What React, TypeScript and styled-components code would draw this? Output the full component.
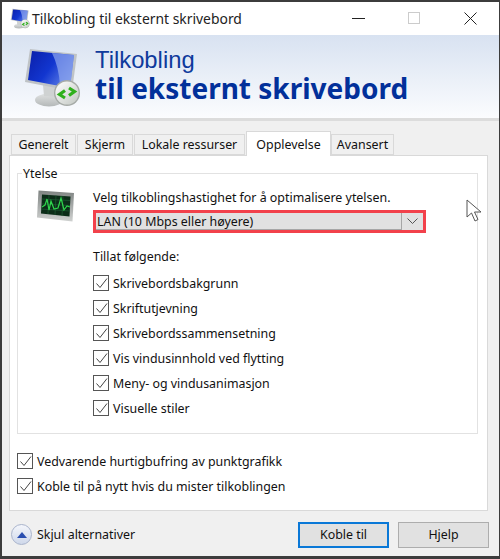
import React from 'react';
import styled, { createGlobalStyle } from 'styled-components';

const uiFont = `"Noto Sans", "Open Sans", "Liberation Sans", sans-serif`;

const GlobalStyle = createGlobalStyle`
  html, body {
    margin: 0;
    padding: 0;
    background: #fff;
  }
`;

const tabs = [
  { label: 'Generelt', width: 65 },
  { label: 'Skjerm', width: 56 },
  { label: 'Lokale ressurser', width: 111 },
  { label: 'Opplevelse', width: 85, active: true },
  { label: 'Avansert', width: 63 },
];

const options = [
  'Skrivebordsbakgrunn',
  'Skriftutjevning',
  'Skrivebordssammensetning',
  'Vis vindusinnhold ved flytting',
  'Meny- og vindusanimasjon',
  'Visuelle stiler',
];

const persistent = [
  'Vedvarende hurtigbufring av punktgrafikk',
  'Koble til på nytt hvis du mister tilkoblingen',
];

function MonitorIcon({ width, idSuffix }: { width: number; idSuffix: string }) {
  return (
    <svg width={width} height={(width * 60) / 58} viewBox="0 0 58 60">
      <defs>
        <linearGradient id={`screen${idSuffix}`} x1="0" y1="0" x2="1" y2="0.6">
          <stop offset="0" stopColor="#0a1ea8" />
          <stop offset="0.55" stopColor="#1236d0" />
          <stop offset="1" stopColor="#5f80e6" />
        </linearGradient>
        <linearGradient id={`badge${idSuffix}`} x1="0" y1="0" x2="1" y2="1">
          <stop offset="0" stopColor="#ffffff" />
          <stop offset="1" stopColor="#c2c7c2" />
        </linearGradient>
        <linearGradient id={`foot${idSuffix}`} x1="0" y1="0" x2="0" y2="1">
          <stop offset="0" stopColor="#dfe1e1" />
          <stop offset="1" stopColor="#b4b8b8" />
        </linearGradient>
      </defs>
      <ellipse cx="26" cy="53" rx="14" ry="6.5" fill={`url(#foot${idSuffix})`} />
      <path d="M20 38 L34 40 L35 50 L21 49 Z" fill="#cfd2d2" />
      <path d="M7 2 L54 7 L49 44 L2 35 Z" fill="#bfc3c6" />
      <path d="M9 4 L51 8 L47 41 L5 33 Z" fill={`url(#screen${idSuffix})`} />
      <path d="M29 6 L51 8 L47 41 L37 39 Q36 20 29 6 Z" fill="#90a8ee" opacity="0.7" />
      <circle cx="44" cy="46" r="13" fill="#a6aba7" />
      <circle cx="44" cy="46" r="11.6" fill={`url(#badge${idSuffix})`} />
      <path d="M42 43.5 L36.5 47.5 L42 51" stroke="#2fb01c" strokeWidth="3.2" fill="none" />
      <path d="M46 41 L51.5 44.5 L46 48.5" stroke="#2fb01c" strokeWidth="3.2" fill="none" />
    </svg>
  );
}

function PerformanceIcon() {
  return (
    <svg width="40" height="33" viewBox="0 0 40 33">
      <defs>
        <linearGradient id="bezel" x1="0" y1="0" x2="0" y2="1">
          <stop offset="0" stopColor="#7f8482" />
          <stop offset="1" stopColor="#cfd1d0" />
        </linearGradient>
      </defs>
      <path d="M1.5 0.5 L37 3 L35.5 31.5 L0 27.5 Z" fill="url(#bezel)" />
      <path d="M5 4.5 L33.5 6.5 L32.5 26.5 L4 23.5 Z" fill="#0b2c18" />
      <path d="M5 9 L33 10.5 M5 14 L33 15.5 M4 19 L33 21 M12 5 L11 24 M19 5.5 L18 25 M26 6 L25 26" stroke="#1e5a33" strokeWidth="0.7" />
      <path d="M5 17 L8 15 L10 9 L12 20 L14 11 L17 19 L21 18 L24 8 L27 20 L30 16 L33 17" stroke="#2fd64c" strokeWidth="1.2" fill="none" />
    </svg>
  );
}

function Check() {
  return (
    <CheckBox>
      <svg width="13" height="13" viewBox="0 0 13 13">
        <path d="M1.5 6.5 L5 10.5 L12 1.5" stroke="#444" strokeWidth="1" fill="none" />
      </svg>
    </CheckBox>
  );
}

export default function App() {
  return (
    <>
      <GlobalStyle />
      <Window>
        <TitleBar>
          <MonitorIcon width={20} idSuffix="Small" />
          <TitleText>Tilkobling til eksternt skrivebord</TitleText>
          <WindowButtons>
            <WindowButton>
              <svg width="13" height="13" viewBox="0 0 13 13"><path d="M0 6.5 H13" stroke="#222" strokeWidth="1" /></svg>
            </WindowButton>
            <WindowButton>
              <svg width="13" height="13" viewBox="0 0 13 13"><rect x="0.5" y="0.5" width="11" height="11" fill="none" stroke="#ccc" /></svg>
            </WindowButton>
            <WindowButton>
              <svg width="13" height="13" viewBox="0 0 13 13"><path d="M0.5 0.5 L12.5 12.5 M12.5 0.5 L0.5 12.5" stroke="#222" strokeWidth="1" /></svg>
            </WindowButton>
          </WindowButtons>
        </TitleBar>

        <Banner>
          <MonitorIcon width={58} idSuffix="Large" />
          <BannerText>
            <BannerLight>Tilkobling</BannerLight>
            <BannerBold>til eksternt skrivebord</BannerBold>
          </BannerText>
        </Banner>

        <Body>
          <TabRow>
            {tabs.map((tab) => (
              <Tab key={tab.label} $active={!!tab.active} $width={tab.width}>{tab.label}</Tab>
            ))}
          </TabRow>
          <Panel>
            <Group>
              <Legend>Ytelse</Legend>
              <GroupInner>
                <IconColumn><PerformanceIcon /></IconColumn>
                <GroupContent>
                  <Label>Velg tilkoblingshastighet for å optimalisere ytelsen.</Label>
                  <SelectHighlight>
                    <Select>
                      <SelectText>LAN (10 Mbps eller høyere)</SelectText>
                      <SelectArrow>
                        <svg width="11" height="7" viewBox="0 0 11 7"><path d="M0.5 0.5 L5.5 5.5 L10.5 0.5" stroke="#555" fill="none" /></svg>
                      </SelectArrow>
                    </Select>
                  </SelectHighlight>
                  <AllowLabel>Tillat følgende:</AllowLabel>
                  <CheckList>
                    {options.map((option) => (
                      <CheckRow key={option}><Check /><span>{option}</span></CheckRow>
                    ))}
                  </CheckList>
                </GroupContent>
              </GroupInner>
            </Group>
            <PersistentList>
              {persistent.map((option) => (
                <CheckRow key={option}><Check /><span>{option}</span></CheckRow>
              ))}
            </PersistentList>
          </Panel>
          <Footer>
            <Toggle>
              <ToggleCircle>
                <svg width="10" height="6" viewBox="0 0 10 6"><path d="M5 0 L10 6 H0 Z" fill="#2b4fb0" /></svg>
              </ToggleCircle>
              <span>Skjul alternativer</span>
            </Toggle>
            <Buttons>
              <Button $primary>Koble til</Button>
              <Button>Hjelp</Button>
            </Buttons>
          </Footer>
        </Body>

        <Cursor>
          <svg width="18" height="24" viewBox="0 0 18 24">
            <path d="M1 1 L1 18 L5.5 14 L9 22 L12 20.5 L8.5 13 L15 13 Z" fill="#fff" stroke="#555" strokeWidth="1" />
          </svg>
        </Cursor>
      </Window>
    </>
  );
}

const Window = styled.div`
  position: relative;
  box-sizing: border-box;
  width: 500px;
  height: 559px;
  background: #fff;
  border-top: 2px solid #3c3c3c;
  border-left: 2px solid #3c3c3c;
  border-right: 1px solid #3c3c3c;
  border-bottom: 3px solid #3c3c3c;
  font-family: ${uiFont};
  font-size: 12.4px;
  color: #111;
  display: flex;
  flex-direction: column;
  overflow: hidden;
`;

const TitleBar = styled.div`
  height: 33px;
  flex: none;
  display: flex;
  align-items: center;
  padding-left: 8px;
  gap: 2px;
  background: #fff;
`;

const TitleText = styled.span`
  font-size: 13.9px;
  color: #222;
`;

const WindowButtons = styled.div`
  margin-left: auto;
  display: flex;
  padding-right: 1px;
`;

const WindowButton = styled.div`
  width: 56px;
  height: 33px;
  display: flex;
  align-items: center;
  justify-content: center;
`;

const Banner = styled.div`
  height: 86px;
  flex: none;
  box-sizing: border-box;
  display: flex;
  align-items: center;
  padding: 0 0 0 21px;
  gap: 14px;
  background: linear-gradient(#d8e2f1, #fbfcfe);
  border-bottom: 3px solid #dcdcdc;
`;

const BannerText = styled.div`
  display: flex;
  flex-direction: column;
  padding-bottom: 3px;
`;

const BannerLight = styled.div`
  font-family: "Liberation Sans", sans-serif;
  font-size: 23.8px;
  line-height: 26px;
  color: #0f3a9c;
`;

const BannerBold = styled.div`
  font-family: "Noto Sans", sans-serif;
  font-size: 28px;
  line-height: 31px;
  font-weight: 700;
  color: #02309a;
  white-space: nowrap;
`;

const Body = styled.div`
  flex: 1;
  display: flex;
  flex-direction: column;
  background: #f0f0f0;
  padding: 10px 10px 0 7px;
  min-height: 0;
`;

const TabRow = styled.div`
  display: flex;
  align-items: flex-end;
  height: 24px;
  padding-left: 2px;
`;

const Tab = styled.div<{ $active: boolean; $width: number }>`
  box-sizing: border-box;
  width: ${({ $width }) => $width}px;
  height: ${({ $active }) => ($active ? 25 : 21)}px;
  margin-bottom: ${({ $active }) => ($active ? -1 : 0)}px;
  position: relative;
  z-index: ${({ $active }) => ($active ? 1 : 0)};
  display: flex;
  align-items: center;
  justify-content: center;
  background: ${({ $active }) => ($active ? '#fff' : '#f0f0f0')};
  border: 1px solid #d9d9d9;
  border-bottom: ${({ $active }) => ($active ? 'none' : '1px solid #d9d9d9')};
  margin-right: ${({ $active }) => ($active ? 0 : 1)}px;
`;

const Panel = styled.div`
  box-sizing: border-box;
  height: 356px;
  margin-right: 1px;
  background: #fff;
  border: 1px solid #d9d9d9;
  padding: 9px 9px 0 7px;
`;

const Group = styled.fieldset`
  box-sizing: border-box;
  height: 269px;
  margin: 0;
  padding: 0;
  border: 1px solid #e2e2e2;
  min-width: 0;
`;

const Legend = styled.legend`
  margin-left: 4px;
  padding: 0 2px 0 1px;
  line-height: 17px;
`;

const GroupInner = styled.div`
  display: flex;
  padding-top: 6px;
`;

const IconColumn = styled.div`
  width: 75px;
  flex: none;
  padding: 2px 0 0 19px;
  box-sizing: border-box;
`;

const GroupContent = styled.div`
  flex: 1;
  display: flex;
  flex-direction: column;
  min-width: 0;
`;

const Label = styled.div`
  line-height: 17px;
  padding-top: 1px;
`;

const SelectHighlight = styled.div`
  box-sizing: border-box;
  width: 333px;
  height: 23px;
  margin-top: 4px;
  border: 3px solid #f2414b;
  background: #e1e1e1;
`;

const Select = styled.div`
  height: 100%;
  display: flex;
  align-items: center;
`;

const SelectText = styled.div`
  flex: 1;
  height: 100%;
  display: flex;
  align-items: center;
  padding-left: 1px;
  border-right: 1px solid #a6a6a6;
  border-bottom: 1px solid #a6a6a6;
  box-sizing: border-box;
`;

const SelectArrow = styled.div`
  width: 21px;
  flex: none;
  display: flex;
  align-items: center;
  justify-content: center;
`;

const AllowLabel = styled.div`
  line-height: 17px;
  margin-top: 15px;
`;

const CheckList = styled.div`
  display: flex;
  flex-direction: column;
  gap: 9px;
  margin-top: 10px;
`;

const CheckRow = styled.div`
  display: flex;
  align-items: center;
  gap: 4px;
  height: 16px;
  white-space: nowrap;
`;

const CheckBox = styled.div`
  box-sizing: border-box;
  width: 16px;
  height: 16px;
  flex: none;
  border: 1px solid #555;
  background: #fff;
  display: flex;
  align-items: center;
  justify-content: center;
`;

const PersistentList = styled.div`
  display: flex;
  flex-direction: column;
  gap: 9px;
  margin-top: 19px;
`;

const Footer = styled.div`
  flex: 1;
  display: flex;
  align-items: center;
  justify-content: space-between;
  padding: 2px 0 0 2px;
`;

const Toggle = styled.div`
  display: flex;
  align-items: center;
  gap: 5px;
`;

const ToggleCircle = styled.div`
  box-sizing: border-box;
  width: 21px;
  height: 21px;
  border-radius: 50%;
  border: 1px solid #a9b4cc;
  background: linear-gradient(#f4f6fb, #cfd8ea);
  display: flex;
  align-items: center;
  justify-content: center;
`;

const Buttons = styled.div`
  display: flex;
  gap: 9px;
`;

const Button = styled.div<{ $primary?: boolean }>`
  box-sizing: border-box;
  width: 91px;
  height: 26px;
  display: flex;
  align-items: center;
  justify-content: center;
  background: #e1e1e1;
  border: ${({ $primary }) => ($primary ? '2px solid #0a78d7' : '1px solid #adadad')};
`;

const Cursor = styled.div`
  position: absolute;
  left: 464px;
  top: 197px;
  line-height: 0;
`;
